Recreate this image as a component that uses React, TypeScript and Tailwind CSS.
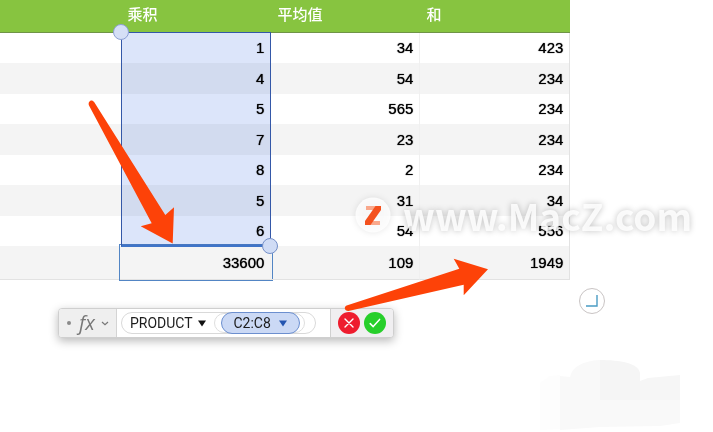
import React from 'react';

const columns = ['乘积', '平均值', '和'];

const rows = [
  { values: [1, 34, 423], height: 'h-[30px]' },
  { values: [4, 54, 234], height: 'h-[31px]' },
  { values: [5, 565, 234], height: 'h-[30px]' },
  { values: [7, 23, 234], height: 'h-[31px]' },
  { values: [8, 2, 234], height: 'h-[30px]' },
  { values: [5, 31, 34], height: 'h-[31px]' },
  { values: [6, 54, 556], height: 'h-[30px]' },
  { values: [33600, 109, 1949], height: 'h-[34px]' },
];

// Blue range over C2:C8, hung on the first cell of the column
const RangeSelection = () => (
  <>
    <div className="absolute inset-x-0 -top-px h-[214px] z-10 bg-[#dce5fa] mix-blend-multiply pointer-events-none"></div>
    <div className="absolute left-0 -right-px -top-px h-[215px] z-10 border border-[#3458a8] border-b-2 border-b-[#3f74c8] pointer-events-none">
      <div className="absolute -top-[9px] -left-[9px] w-4 h-4 rounded-full border border-[#8c9fd4] bg-[#d5dff6]"></div>
      <div className="absolute -bottom-[9px] -right-2 w-4 h-4 rounded-full border border-[#7590c8] bg-[#d0dcf5]"></div>
    </div>
  </>
);

const DataTable = () => (
  <table className="w-full table-fixed border-separate border-spacing-0 font-['Liberation_Sans','Noto_Sans_CJK_SC',sans-serif]">
    <colgroup>
      <col />
      <col className="w-[150px]" />
      <col className="w-[149px]" />
      <col className="w-[150px]" />
    </colgroup>
    <thead>
      <tr className="h-[33px] bg-[#87c440] text-white text-[15px] leading-5">
        <th className="p-0 border-b border-[#6f9447]"></th>
        {columns.map((name) => (
          <th key={name} scope="col" className="p-0 pl-1.5 pb-0.5 text-left font-medium border-b border-[#6f9447]">
            {name}
          </th>
        ))}
      </tr>
    </thead>
    <tbody>
      {rows.map((row, index) => {
        const last = index === rows.length - 1;
        return (
          <tr
            key={index}
            className={`${row.height} ${index % 2 ? 'bg-[#f4f4f4]' : 'bg-white'} text-[15px] leading-5 text-black [text-shadow:0_0_1px_#000000]`}
          >
            <td className={`p-0 ${last ? 'border-b border-[#e2e2e2]' : ''}`}></td>
            {row.values.map((value, col) => (
              <td
                key={col}
                className={`relative p-0 pr-1.5 text-right border-r ${col === 2 ? 'border-r-[#e2e2e2]' : 'border-r-[#f0f0f0]'} ${last ? 'border-b border-b-[#e2e2e2]' : ''}`}
              >
                {value}
                {index === 0 && col === 0 && <RangeSelection />}
                {last && col === 0 && (
                  <div className="absolute -inset-0.5 -right-[3px] border border-[#5285c4] pointer-events-none"></div>
                )}
              </td>
            ))}
          </tr>
        );
      })}
    </tbody>
  </table>
);

const FormulaBar = () => (
  <div className="flex w-[336px] h-[30px] ml-[58px] mt-7 rounded border border-[#cfcfcf] bg-white shadow-[0_3px_10px_rgba(0,0,0,0.28)] overflow-hidden font-['Roboto',sans-serif]">
    <button type="button" aria-label="Functions" className="flex items-center w-[58px] pl-2 bg-[#efefef] border-r border-[#d4d4d4] text-[#777777]">
      <span className="w-1 h-1 rounded-full bg-[#8a8a8a]"></span>
      <span className="ml-2 text-xl leading-6 italic font-['Open_Sans',sans-serif]">fx</span>
      <svg width="8" height="5" viewBox="0 0 8 5" className="ml-1.5" fill="none" stroke="#777777" strokeWidth="1.2">
        <path d="M1 1l3 2.6L7 1" />
      </svg>
    </button>
    <div className="flex flex-1 items-center pl-1">
      <div className="flex items-center h-[22px] rounded-full border border-[#d9d9d9] pl-2">
        <button type="button" className="flex items-center gap-[5px] text-sm leading-5 text-[#1c1c1c]">
          PRODUCT
          <svg width="8" height="7" viewBox="0 0 8 7" fill="#111111">
            <path d="M0 0.5h8L4 6.5z" />
          </svg>
        </button>
        <div className="flex items-center h-5 ml-2 pl-1.5 pr-1 rounded-full border border-[#dedede]">
          <button type="button" className="flex items-center justify-center gap-2 w-[79px] h-[22px] rounded-full border border-[#6c8fcf] bg-[#cbd9f5] text-sm leading-5 text-[#1c1c1c]">
            C2:C8
            <svg width="8" height="7" viewBox="0 0 8 7" fill="#2455b0">
              <path d="M0 0.5h8L4 6.5z" />
            </svg>
          </button>
        </div>
        <span className="w-2.5"></span>
      </div>
    </div>
    <div className="flex items-center gap-1 w-[63px] pl-[7px] bg-[#f0eff1] border-l border-[#d0d0d0]">
      <button type="button" aria-label="Cancel" className="flex items-center justify-center w-[22px] h-[22px] rounded-full bg-[#ee1c2e]">
        <svg width="10" height="10" viewBox="0 0 10 10" stroke="#ffffff" strokeWidth="1.4" strokeLinecap="round">
          <path d="M1 1l8 8M9 1L1 9" />
        </svg>
      </button>
      <button type="button" aria-label="Accept" className="flex items-center justify-center w-[22px] h-[22px] rounded-full bg-[#27cf2b]">
        <svg width="12" height="10" viewBox="0 0 12 10" fill="none" stroke="#ffffff" strokeWidth="1.5" strokeLinecap="round" strokeLinejoin="round">
          <path d="M1.2 5.6l3 3L10.6 1.4" />
        </svg>
      </button>
    </div>
  </div>
);

const Watermark = () => (
  <div className="absolute left-[355px] top-[191px] h-12 flex items-center gap-3 z-20 pointer-events-none">
    <svg width="36" height="48" viewBox="0 0 36 48" className="drop-shadow-[0_0_3px_rgba(0,0,0,0.12)]">
      <circle cx="18" cy="24" r="17.5" fill="#ffffff" fillOpacity="0.8" />
      <path d="M11 15h15v4H11z" fill="#f9a88c" />
      <path d="M10 30h15v4H10z" fill="#f9a88c" />
      <path d="M20.5 15H26v4L15.5 34H10V30z" fill="#f4511e" />
    </svg>
    <span className="text-[37px] leading-[48px] font-bold text-white/85 font-['Noto_Sans_CJK_SC',sans-serif] [text-shadow:0_0_6px_rgba(0,0,0,0.25)]">
      www.MacZ.com
    </span>
  </div>
);

const Arrows = () => (
  <svg width="500" height="320" viewBox="0 0 500 320" className="absolute left-0 top-0 z-30 pointer-events-none" fill="#fd4208">
    <path d="M94.3 102.2L165.3 215L174 207.3L172.7 243.5L140.7 226.3L151.7 223.3L89 105.5C87.5 101.5 91.5 98.3 94.3 102.2z" />
    <path d="M346.7 305.6L459.3 268.7L453.7 258.7L488 269.3L463.7 295.3V284.7L348.5 310.9C344.5 311.2 343.5 307 346.7 305.6z" />
  </svg>
);

// Pale smudge in the lower right corner
const Smudge = () => (
  <svg width="140" height="72" viewBox="0 0 140 72" className="absolute right-[33px] top-[359px] pointer-events-none">
    <path d="M0 24L10 17L20 16V70L0 71z" fill="#fdfdfd" />
    <path d="M20 17L30 18C32 8 42 2 60 1V68L20 71z" fill="#f9f9f9" />
    <path d="M60 1C80 1 98 4 100 14V41H60z" fill="#f5f5f5" />
    <path d="M100 22L108 19L140 16V41H100z" fill="#f6f6f6" />
    <path d="M60 41H140V64L120 67L60 68z" fill="#f9f9f9" />
  </svg>
);

const App = () => {
  return (
    <main className="relative min-h-screen bg-white overflow-hidden">
      <div className="flex items-start">
        <div className="w-4/5">
          <DataTable />
          <FormulaBar />
        </div>
        <button type="button" aria-label="Resize table" className="flex items-center justify-center w-[26px] h-[26px] mt-72 ml-[9px] rounded-full border border-[#c9c4c4] bg-white">
          <svg width="12" height="12" viewBox="0 0 12 12" fill="none" stroke="#4a9cc4" strokeWidth="1.4">
            <path d="M11 0v11H0" />
          </svg>
        </button>
      </div>
      <Watermark />
      <Arrows />
      <Smudge />
    </main>
  );
};

export default App;
